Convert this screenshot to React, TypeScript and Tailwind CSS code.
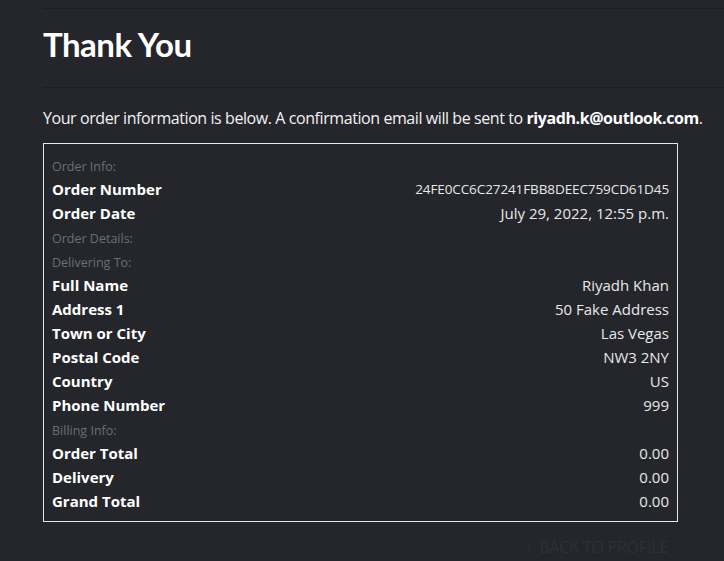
import React from 'react';

type Row =
  | { kind: 'section'; text: string }
  | { kind: 'field'; label: string; value: string; small?: boolean };

const rows: Row[] = [
  { kind: 'section', text: 'Order Info:' },
  { kind: 'field', label: 'Order Number', value: '24FE0CC6C27241FBB8DEEC759CD61D45', small: true },
  { kind: 'field', label: 'Order Date', value: 'July 29, 2022, 12:55 p.m.' },
  { kind: 'section', text: 'Order Details:' },
  { kind: 'section', text: 'Delivering To:' },
  { kind: 'field', label: 'Full Name', value: 'Riyadh Khan' },
  { kind: 'field', label: 'Address 1', value: '50 Fake Address' },
  { kind: 'field', label: 'Town or City', value: 'Las Vegas' },
  { kind: 'field', label: 'Postal Code', value: 'NW3 2NY' },
  { kind: 'field', label: 'Country', value: 'US' },
  { kind: 'field', label: 'Phone Number', value: '999' },
  { kind: 'section', text: 'Billing Info:' },
  { kind: 'field', label: 'Order Total', value: '0.00' },
  { kind: 'field', label: 'Delivery', value: '0.00' },
  { kind: 'field', label: 'Grand Total', value: '0.00' },
];

export default function App() {
  return (
    <div className="min-h-[561px] bg-[#25262b] text-white overflow-hidden font-['Open_Sans',sans-serif]">
      <div className="pl-[43px] pt-2">
        <hr className="border-0 border-t border-[#1d1e22]" />
        <h1 className="mt-[18px] mb-[25px] h-[35px] text-[33px] leading-[35px] font-bold tracking-[-0.5px] font-['Lato',sans-serif]">
          Thank You
        </h1>
        <hr className="border-0 border-t border-[#1d1e22]" />
        <p className="mt-[18px] text-[16px] leading-[24px] text-[#f2f2f2] tracking-[-0.42px] whitespace-nowrap">
          Your order information is below. A confirmation email will be sent to{' '}
          <strong className="font-bold text-white">riyadh.k@outlook.com</strong>.
        </p>
        <div className="mt-[13px] w-[635px] border border-[#e6e6e6] px-2 pt-[9px] pb-[8px]">
          {rows.map((r, i) =>
            r.kind === 'section' ? (
              <div key={i} className="h-6 pt-[2px] leading-6 text-[12.5px] text-[#6c6f76]">
                {r.text}
              </div>
            ) : (
              <div key={i} className="flex h-6 items-center justify-between">
                <span className="text-[15px] font-bold text-white">{r.label}</span>
                <span
                  className={
                    r.small
                      ? 'text-[13.5px] text-[#e8e8e8] tracking-[-0.1px]'
                      : 'text-[15px] text-[#e8e8e8]'
                  }
                >
                  {r.value}
                </span>
              </div>
            )
          )}
        </div>
        <div className="mt-[13px] flex w-[635px] justify-end pr-[10px]">
          <span className="text-[16px] uppercase tracking-[-0.2px] text-[#2f3036]">&lsaquo;&nbsp; Back to Profile</span>
        </div>
      </div>
    </div>
  );
}
